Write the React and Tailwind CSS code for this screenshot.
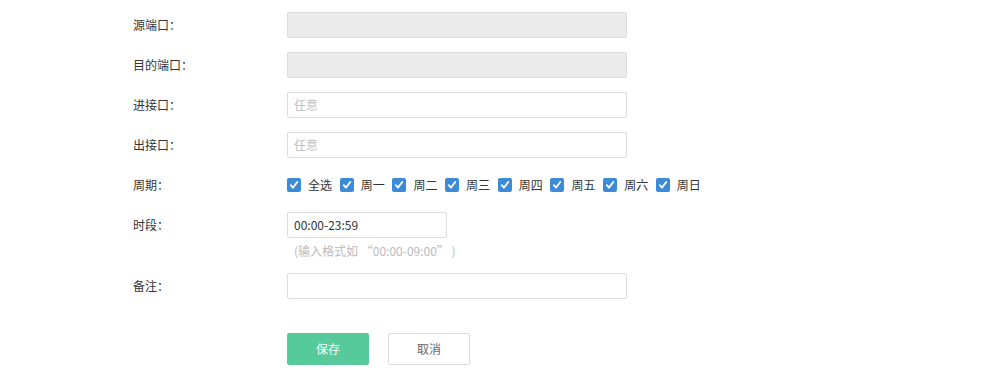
import React from "react";

const font = { fontFamily: '"Noto Sans CJK SC", "Liberation Sans", sans-serif' };

function Row({ label, children, className = "" }) {
  return (
    <div className={`flex items-center mb-[14px] ${className}`}>
      <div className="w-[154px] text-[12px] text-[#333] leading-[26px]">{label}</div>
      {children}
    </div>
  );
}

function Check({ label }) {
  return (
    <label className="flex items-center w-[52.7px] shrink-0">
      <span className="w-[14px] h-[14px] rounded-[2px] bg-[#3d8ad7] flex items-center justify-center">
        <svg width="10" height="10" viewBox="0 0 10 10">
          <path d="M1.8 5.2 L4 7.6 L8.3 2" fill="none" stroke="#fff" strokeWidth="1.8" strokeLinecap="round" strokeLinejoin="round" />
        </svg>
      </span>
      <span className="ml-[7px] text-[12px] text-[#333] leading-[26px] whitespace-nowrap">{label}</span>
    </label>
  );
}

export default function App() {
  const days = ["全选", "周一", "周二", "周三", "周四", "周五", "周六", "周日"];
  return (
    <div className="w-[1008px] h-[382px] bg-white pt-[12px] pl-[133px]" style={font}>
      <Row label="源端口：">
        <div className="w-[340px] h-[26px] rounded-[2px] border border-[#dcdcdc] bg-[#ebebeb]" />
      </Row>
      <Row label="目的端口：">
        <div className="w-[340px] h-[26px] rounded-[2px] border border-[#dcdcdc] bg-[#ebebeb]" />
      </Row>
      <Row label="进接口：">
        <div className="w-[340px] h-[26px] rounded-[2px] border border-[#dcdcdc] bg-white px-[6px] text-[12px] leading-[24px] text-[#c0c0c0]">任意</div>
      </Row>
      <Row label="出接口：">
        <div className="w-[340px] h-[26px] rounded-[2px] border border-[#dcdcdc] bg-white px-[6px] text-[12px] leading-[24px] text-[#c0c0c0]">任意</div>
      </Row>
      <Row label="周期：">
        <div className="flex items-center h-[26px]">
          {days.map((d) => (
            <Check key={d} label={d} />
          ))}
        </div>
      </Row>
      <div className="flex mb-[14px]">
        <div className="w-[154px] text-[12px] text-[#333] leading-[26px]">时段：</div>
        <div className="flex flex-col">
          <div className="w-[160px] h-[26px] rounded-[2px] border border-[#dcdcdc] bg-white px-[6px] text-[12px] leading-[24px] text-[#333]">00:00-23:59</div>
          <div className="mt-[5px] pl-[7px] text-[12px] leading-[16px] text-[#bbbbbb] whitespace-pre">(输入格式如 “00:00-09:00” )</div>
        </div>
      </div>
      <Row label="备注：">
        <div className="w-[340px] h-[26px] rounded-[2px] border border-[#dcdcdc] bg-white" />
      </Row>
      <div className="flex mt-[34px] pl-[154px] gap-[19px]">
        <button className="w-[82px] h-[32px] rounded-[2px] bg-[#56ca9b] text-white text-[12px]">保存</button>
        <button className="w-[82px] h-[32px] rounded-[2px] border border-[#dcdcdc] bg-white text-[#666] text-[12px]">取消</button>
      </div>
    </div>
  );
}
